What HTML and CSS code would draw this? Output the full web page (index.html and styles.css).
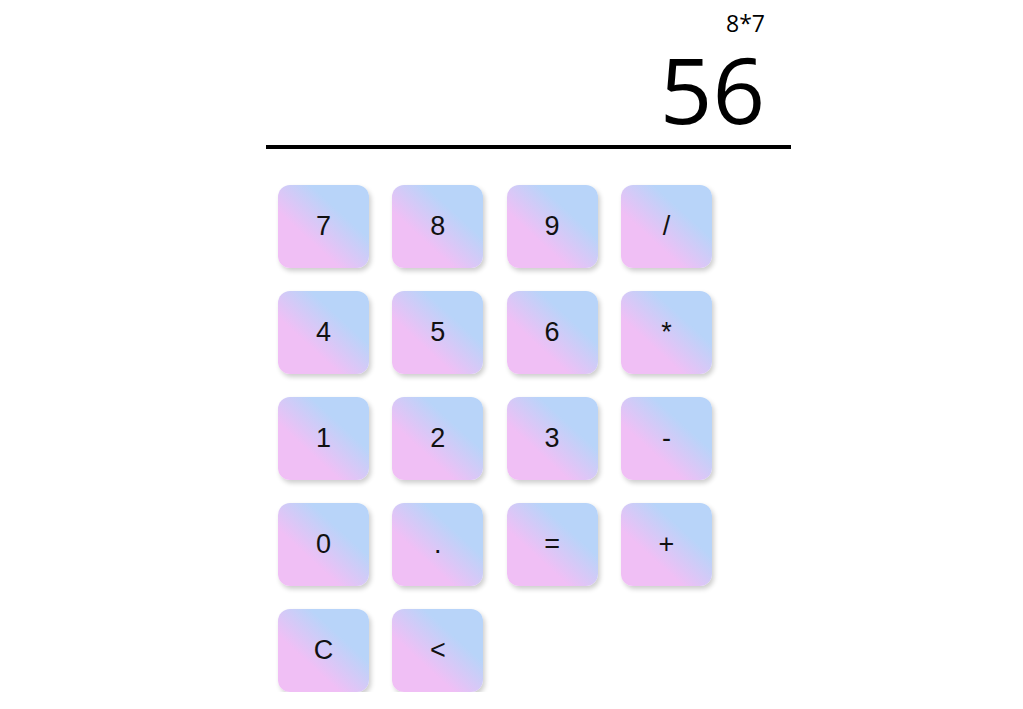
FILE: index.html
```html
<!DOCTYPE html>
<html>
<head>
<meta charset="UTF-8">
<title>Calculator</title>
<link rel="stylesheet" href="styles.css">
</head>
<body>
<div id="calc">
	<div id="screen">
		<div id="expr">8*7</div>
		<div id="result">56</div>
	</div>
	<div id="keys">
		<!-- 1줄 -->
		<button type="button" class="key">7</button>
		<button type="button" class="key">8</button>
		<button type="button" class="key">9</button>
		<button type="button" class="key">/</button>
		<!-- 2줄 -->
		<button type="button" class="key">4</button>
		<button type="button" class="key">5</button>
		<button type="button" class="key">6</button>
		<button type="button" class="key">*</button>
		<!-- 3줄 -->
		<button type="button" class="key">1</button>
		<button type="button" class="key">2</button>
		<button type="button" class="key">3</button>
		<button type="button" class="key">-</button>
		<!-- 4줄 -->
		<button type="button" class="key">0</button>
		<button type="button" class="key">.</button>
		<button type="button" class="key">=</button>
		<button type="button" class="key">+</button>
		<!-- 5줄 -->
		<button type="button" class="key">C</button>
		<button type="button" class="key">&lt;</button>
	</div>
</div>
</body>
</html>
```

FILE: styles.css
```css
body{
	margin: 0;
	background: #fff;
}

#calc{
	width: 525px;
	margin-left: 266px;
}

#screen{
	border-bottom: 4px solid #000;
	padding-right: 26px;
	text-align: right;
	font-family: "Open Sans", sans-serif;
	color: #000;
}

#expr{
	font-size: 23px;
	line-height: 24px;
	padding-top: 11px;
}

#result{
	font-size: 92px;
	line-height: 92px;
	margin-top: 8px;
	padding-bottom: 10px;
}

#keys{
	display: grid;
	grid-template-columns: repeat(4, 91px);
	grid-auto-rows: 83px;
	column-gap: 23.3px;
	row-gap: 23px;
	padding: 36px 0 0 12px;
}

.key{
	border: none;
	border-radius: 12px;
	background: linear-gradient(to top right, #f0bff5 34%, #b8d4f9 68%);
	box-shadow: 2px 3px 5px rgba(0,0,0,0.2);
	font-family: "Liberation Sans", Arial, sans-serif;
	font-size: 27px;
	color: #111;
	cursor: pointer;
	padding: 0;
}
```
